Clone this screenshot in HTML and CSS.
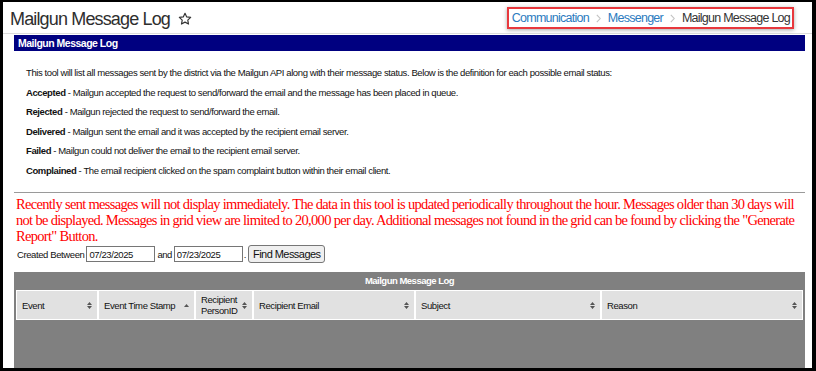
FILE: index.html
```html
<!DOCTYPE html>
<html lang="en">
<head>
<meta charset="utf-8">
<title>Mailgun Message Log</title>
<link rel="stylesheet" href="styles.css">
</head>
<body>
<div class="screen">
  <header class="page-head">
    <h1 class="page-title">
      <span>Mailgun Message Log</span>
      <svg class="star" width="14" height="14" viewBox="0 0 24 24" aria-hidden="true"><path d="M12 2.2l2.95 6.2 6.75.85-4.95 4.65 1.3 6.75L12 17.35 5.95 20.65l1.3-6.75L2.3 9.25l6.75-.85z" fill="none" stroke="#333" stroke-width="2" stroke-linejoin="round"/></svg>
    </h1>
    <nav class="crumbs">
      <a class="crumb-link" href="#">Communication</a>
      <svg class="chev" width="5" height="9" viewBox="0 0 5 9" aria-hidden="true"><path d="M0.8 0.8l3.4 3.7-3.4 3.7" fill="none" stroke="#c2c2c2" stroke-width="1.1"/></svg>
      <a class="crumb-link" href="#">Messenger</a>
      <svg class="chev" width="5" height="9" viewBox="0 0 5 9" aria-hidden="true"><path d="M0.8 0.8l3.4 3.7-3.4 3.7" fill="none" stroke="#c2c2c2" stroke-width="1.1"/></svg>
      <span class="crumb-current">Mailgun Message Log</span>
    </nav>
  </header>
  <main class="content">
    <div class="bar">Mailgun Message Log</div>
    <div class="desc">
      <p>This tool will list all messages sent by the district via the Mailgun API along with their message status. Below is the definition for each possible email status:</p>
      <p><b>Accepted</b> - Mailgun accepted the request to send/forward the email and the message has been placed in queue.</p>
      <p><b>Rejected</b> - Mailgun rejected the request to send/forward the email.</p>
      <p><b>Delivered</b> - Mailgun sent the email and it was accepted by the recipient email server.</p>
      <p><b>Failed</b> - Mailgun could not deliver the email to the recipient email server.</p>
      <p><b>Complained</b> - The email recipient clicked on the spam complaint button within their email client.</p>
    </div>
    <hr class="rule">
    <p class="notice">Recently sent messages will not display immediately. The data in this tool is updated periodically throughout the hour. Messages older than 30 days will not be displayed. Messages in grid view are limited to 20,000 per day. Additional messages not found in the grid can be found by clicking the "Generate Report" Button.</p>
    <form class="filter">
      <span>Created Between</span>
      <input class="date" type="text" value="07/23/2025">
      <span class="and">and</span>
      <input class="date" type="text" value="07/23/2025">
      <span class="dot">.</span>
      <button class="find" type="button">Find Messages</button>
    </form>
    <section class="grid">
      <div class="grid-title">Mailgun Message Log</div>
      <table class="grid-table">
        <colgroup>
          <col class="c-event"><col class="c-time"><col class="c-pid"><col class="c-email"><col class="c-subject"><col class="c-reason">
        </colgroup>
        <thead>
          <tr>
            <th><div class="th"><span>Event</span><svg class="sort" width="5" height="7" viewBox="0 0 5 7"><path d="M0 3L2.5 0 5 3zM0 4l2.5 3L5 4z" fill="#555"/></svg></div></th>
            <th><div class="th"><span>Event Time Stamp</span><svg class="sort up" width="5" height="3" viewBox="0 0 5 3"><path d="M0 3L2.5 0 5 3z" fill="#555"/></svg></div></th>
            <th><div class="th"><span>Recipient PersonID</span><svg class="sort" width="5" height="7" viewBox="0 0 5 7"><path d="M0 3L2.5 0 5 3zM0 4l2.5 3L5 4z" fill="#555"/></svg></div></th>
            <th><div class="th"><span>Recipient Email</span><svg class="sort" width="5" height="7" viewBox="0 0 5 7"><path d="M0 3L2.5 0 5 3zM0 4l2.5 3L5 4z" fill="#555"/></svg></div></th>
            <th><div class="th"><span>Subject</span><svg class="sort" width="5" height="7" viewBox="0 0 5 7"><path d="M0 3L2.5 0 5 3zM0 4l2.5 3L5 4z" fill="#555"/></svg></div></th>
            <th><div class="th"><span>Reason</span><svg class="sort" width="5" height="7" viewBox="0 0 5 7"><path d="M0 3L2.5 0 5 3zM0 4l2.5 3L5 4z" fill="#555"/></svg></div></th>
          </tr>
        </thead>
      </table>
    </section>
  </main>
</div>
</body>
</html>
```
FILE: styles.css
```css
* { box-sizing: border-box; }
html, body { margin: 0; padding: 0; }
body {
  background: #000;
  width: 816px;
  height: 371px;
  overflow: hidden;
  padding: 2px 4px 3px 3px;
  font-family: "Liberation Sans", Arial, sans-serif;
  color: #111;
}
.screen {
  background: #fff;
  height: 366px;
  display: flex;
  flex-direction: column;
  overflow: hidden;
}
.page-head {
  height: 32px;
  flex: none;
  display: flex;
  justify-content: space-between;
  align-items: flex-start;
  padding: 3px 18px 0 7px;
  border-bottom: 1px solid #dcdcdc;
}
.page-title {
  margin: 0;
  display: flex;
  align-items: center;
  gap: 8px;
  font-size: 18px;
  letter-spacing: -0.85px;
  font-weight: normal;
  line-height: 28px;
  color: #2e2e2e;
}
.star { display: block; margin-top: -1px; }
.crumbs {
  margin-top: 2px;
  height: 22px;
  display: flex;
  align-items: center;
  gap: 7px;
  padding: 0 2px 0 3px;
  border: 2px solid #e8383d;
  box-shadow: 0 1px 4px rgba(0, 0, 0, 0.35);
  font-size: 12.5px;
  letter-spacing: -0.75px;
  line-height: 18px;
}
.crumb-link { color: #2b7bc0; text-decoration: none; }
.crumb-current { color: #333; }
.chev { display: block; }
.content {
  flex: 1;
  display: flex;
  flex-direction: column;
  padding: 0 7px 0 11px;
  min-height: 0;
}
.bar {
  margin-top: 1px;
  height: 16px;
  flex: none;
  background: #000080;
  color: #fff;
  font-weight: bold;
  font-size: 10.5px;
  letter-spacing: -0.5px;
  line-height: 16px;
  padding-left: 4px;
}
.desc {
  padding: 12px 0 0 12px;
  font-size: 9.5px;
  letter-spacing: -0.4px;
  line-height: 19.5px;
}
.desc p { margin: 0; }
.rule {
  margin: 12px 0 0;
  border: 0;
  height: 1px;
  background: #9a9a9a;
  flex: none;
}
.notice {
  margin: 3px 0 0;
  padding-left: 2px;
  font-family: "Liberation Serif", "Times New Roman", serif;
  font-size: 14.5px;
  letter-spacing: -0.69px;
  line-height: 16px;
  color: #ff0000;
}
.filter {
  margin: 1px 0 0;
  height: 18px;
  display: flex;
  align-items: center;
  padding-left: 3px;
  font-size: 9.5px;
  letter-spacing: -0.4px;
  gap: 2px;
}
.date {
  margin: 0;
  width: 69px;
  height: 16px;
  border: 1px solid #767676;
  padding: 0 2px;
  font-family: inherit;
  font-size: 9.5px;
  letter-spacing: -0.4px;
  color: #111;
}
.and { letter-spacing: -0.5px; }
.dot { margin-left: -1px; }
.find {
  margin: 0;
  height: 18px;
  padding: 0 4px;
  border: 1px solid #767676;
  border-radius: 3px;
  background: #efefef;
  font-family: inherit;
  font-size: 11px;
  letter-spacing: -0.55px;
  color: #111;
}
.grid {
  margin-top: 9px;
  flex: 1;
  background: #808080;
  padding: 0 2px;
}
.grid-title {
  height: 18px;
  line-height: 18px;
  text-align: center;
  color: #fff;
  font-weight: bold;
  font-size: 9.5px;
  letter-spacing: -0.5px;
}
.grid-table {
  width: 787px;
  table-layout: fixed;
  border-collapse: separate;
  border-spacing: 0;
}
.c-event { width: 82px; }
.c-time { width: 97px; }
.c-pid { width: 58px; }
.c-email { width: 162px; }
.c-subject { width: 186px; }
.c-reason { width: 202px; }
.grid-table th {
  height: 30px;
  padding: 0 5px 0 5px;
  border: 1px solid #fff;
  background: #e1e1e1;
  font-weight: normal;
  font-size: 9.5px;
  letter-spacing: -0.4px;
  line-height: 11px;
  text-align: left;
  color: #111;
}
.th {
  display: flex;
  align-items: center;
  justify-content: space-between;
  gap: 4px;
}
.sort { flex: none; display: block; }
```
